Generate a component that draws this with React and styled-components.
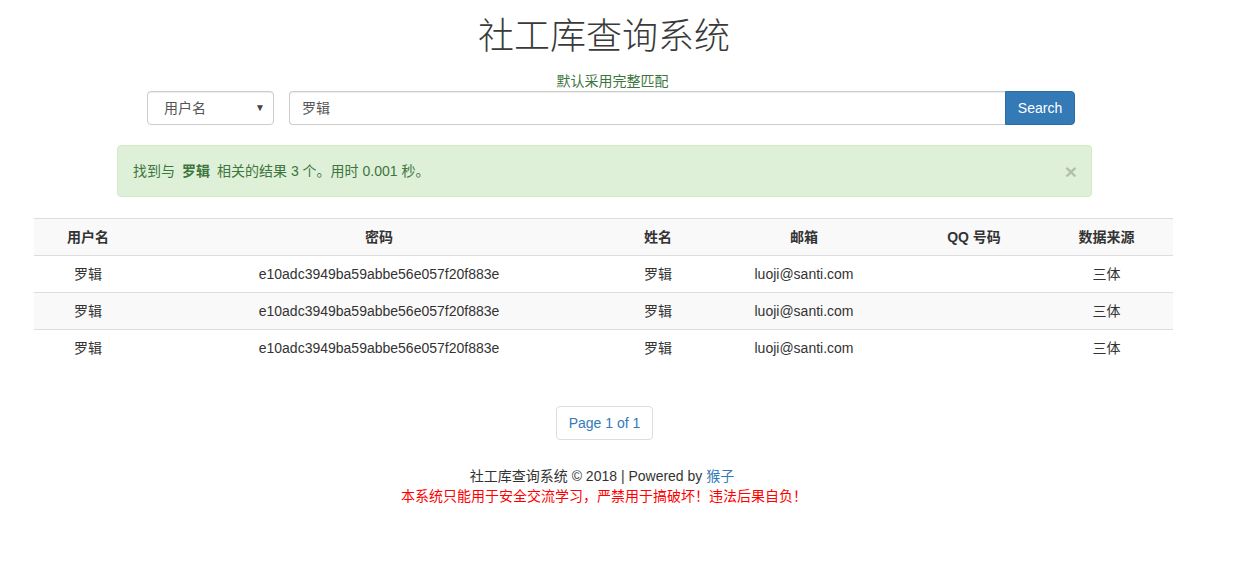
import React from 'react';
import styled, { createGlobalStyle } from 'styled-components';

const COLORS = {
  text: '#333333',
  border: '#dddddd',
  inputBorder: '#cccccc',
  primary: '#337ab7',
  primaryBorder: '#2e6da4',
  successBg: '#dff0d8',
  successBorder: '#d6e9c6',
  successText: '#3c763d',
  stripe: '#f9f9f9',
  danger: '#ff0000',
};

const FONT = `"Liberation Sans", Arial, "Noto Sans CJK SC", sans-serif`;

const GlobalStyle = createGlobalStyle`
  html, body {
    margin: 0;
    padding: 0;
    background: #fff;
  }
  body {
    font-family: ${FONT};
    font-size: 14px;
    line-height: 20px;
    color: ${COLORS.text};
  }
  * { box-sizing: border-box; }
`;

const Page = styled.div`
  width: 1208px;
  display: flex;
  flex-direction: column;
`;

const Title = styled.h1`
  margin: 13px 0 0;
  text-align: center;
  font-family: "Noto Sans CJK SC", serif;
  font-weight: 300;
  font-size: 36px;
  line-height: 40px;
  color: #3a3a3a;
`;

const Hint = styled.div`
  margin-top: 18px;
  padding-left: 17px;
  text-align: center;
  color: ${COLORS.successText};
`;

const SearchRow = styled.form`
  margin-left: 147px;
  width: 928px;
  display: flex;
  gap: 15px;
  height: 34px;
`;

const SelectBox = styled.div`
  width: 127px;
  height: 34px;
  border: 1px solid ${COLORS.inputBorder};
  border-radius: 4px;
  padding: 0 8px 0 16px;
  display: flex;
  align-items: center;
  justify-content: space-between;
  box-shadow: inset 0 1px 1px rgba(0, 0, 0, 0.075);
  color: #555;
`;

const Caret = styled.span`
  font-size: 10px;
  color: #444;
`;

const InputGroup = styled.div`
  flex: 1;
  display: flex;
`;

const TextInput = styled.div`
  flex: 1;
  height: 34px;
  border: 1px solid ${COLORS.inputBorder};
  border-right: none;
  border-radius: 4px 0 0 4px;
  padding: 0 12px;
  display: flex;
  align-items: center;
  color: #555;
  box-shadow: inset 0 1px 1px rgba(0, 0, 0, 0.075);
`;

const SearchButton = styled.button`
  width: 70px;
  height: 34px;
  border: 1px solid ${COLORS.primaryBorder};
  border-radius: 0 4px 4px 0;
  background: ${COLORS.primary};
  color: #fff;
  font-family: ${FONT};
  font-size: 14px;
  padding: 0;
`;

const Alert = styled.div`
  margin: 20px 0 0 117px;
  width: 975px;
  height: 52px;
  padding: 15px;
  background: ${COLORS.successBg};
  border: 1px solid ${COLORS.successBorder};
  border-radius: 4px;
  color: ${COLORS.successText};
  display: flex;
  justify-content: space-between;
  align-items: center;
`;

const Keyword = styled.b`
  margin: 0 7px;
`;

const Close = styled.span`
  font-size: 21px;
  font-weight: bold;
  line-height: 1;
  color: #000;
  opacity: 0.2;
  margin-right: -1px;
  text-shadow: 0 1px 0 #fff;
`;

const Table = styled.table`
  margin: 21px 0 0 34px;
  width: 1139px;
  border-collapse: collapse;
  border-spacing: 0;
  table-layout: fixed;
`;

const Th = styled.th`
  padding: 8px;
  line-height: 20px;
  text-align: center;
  font-weight: bold;
  border-top: 1px solid ${COLORS.border};
  border-bottom: 1px solid ${COLORS.border};
  background: ${COLORS.stripe};
`;

const Tr = styled.tr`
  background: ${(p) => (p.$striped ? COLORS.stripe : '#fff')};
`;

const Td = styled.td`
  padding: 8px;
  line-height: 20px;
  text-align: center;
  border-top: 1px solid ${COLORS.border};
`;

const Pager = styled.div`
  margin-top: 40px;
  display: flex;
  justify-content: center;
  padding-left: 1px;
`;

const PageLink = styled.span`
  padding: 6px 12px;
  border: 1px solid ${COLORS.border};
  border-radius: 4px;
  color: ${COLORS.primary};
  line-height: 20px;
`;

const Footer = styled.footer`
  margin-top: 26px;
  text-align: center;
  line-height: 20px;
`;

const FooterLine = styled.div`
  padding-right: 4px;
`;

const FooterLink = styled.a`
  color: ${COLORS.primary};
  text-decoration: none;
`;

const Warning = styled.div`
  color: ${COLORS.danger};
`;

const columns = [
  { title: '用户名', width: 108 },
  { title: '密码', width: 474 },
  { title: '姓名', width: 84 },
  { title: '邮箱', width: 208 },
  { title: 'QQ 号码', width: 132 },
  { title: '数据来源', width: 133 },
];

const rows = [1, 2, 3].map(() => [
  '罗辑',
  'e10adc3949ba59abbe56e057f20f883e',
  '罗辑',
  'luoji@santi.com',
  '',
  '三体',
]);

export default function App() {
  return (
    <>
      <GlobalStyle />
      <Page>
        <Title>社工库查询系统</Title>
        <Hint>默认采用完整匹配</Hint>
        <SearchRow onSubmit={(e) => e.preventDefault()}>
          <SelectBox>
            <span>用户名</span>
            <Caret>▼</Caret>
          </SelectBox>
          <InputGroup>
            <TextInput>罗辑</TextInput>
            <SearchButton type="submit">Search</SearchButton>
          </InputGroup>
        </SearchRow>

        <Alert>
          <span>
            找到与<Keyword>罗辑</Keyword>相关的结果 3 个。用时 0.001 秒。
          </span>
          <Close>×</Close>
        </Alert>

        <Table>
          <colgroup>
            {columns.map((c) => (
              <col key={c.title} style={{ width: c.width }} />
            ))}
          </colgroup>
          <thead>
            <tr>
              {columns.map((c) => (
                <Th key={c.title}>{c.title}</Th>
              ))}
            </tr>
          </thead>
          <tbody>
            {rows.map((r, i) => (
              <Tr key={i} $striped={i % 2 === 1}>
                {r.map((cell, j) => (
                  <Td key={j}>{cell}</Td>
                ))}
              </Tr>
            ))}
          </tbody>
        </Table>

        <Pager>
          <PageLink>Page 1 of 1</PageLink>
        </Pager>

        <Footer>
          <FooterLine>
            社工库查询系统 © 2018 | Powered by <FooterLink href="#">猴子</FooterLink>
          </FooterLine>
          <Warning>本系统只能用于安全交流学习，严禁用于搞破坏！违法后果自负！</Warning>
        </Footer>
      </Page>
    </>
  );
}
